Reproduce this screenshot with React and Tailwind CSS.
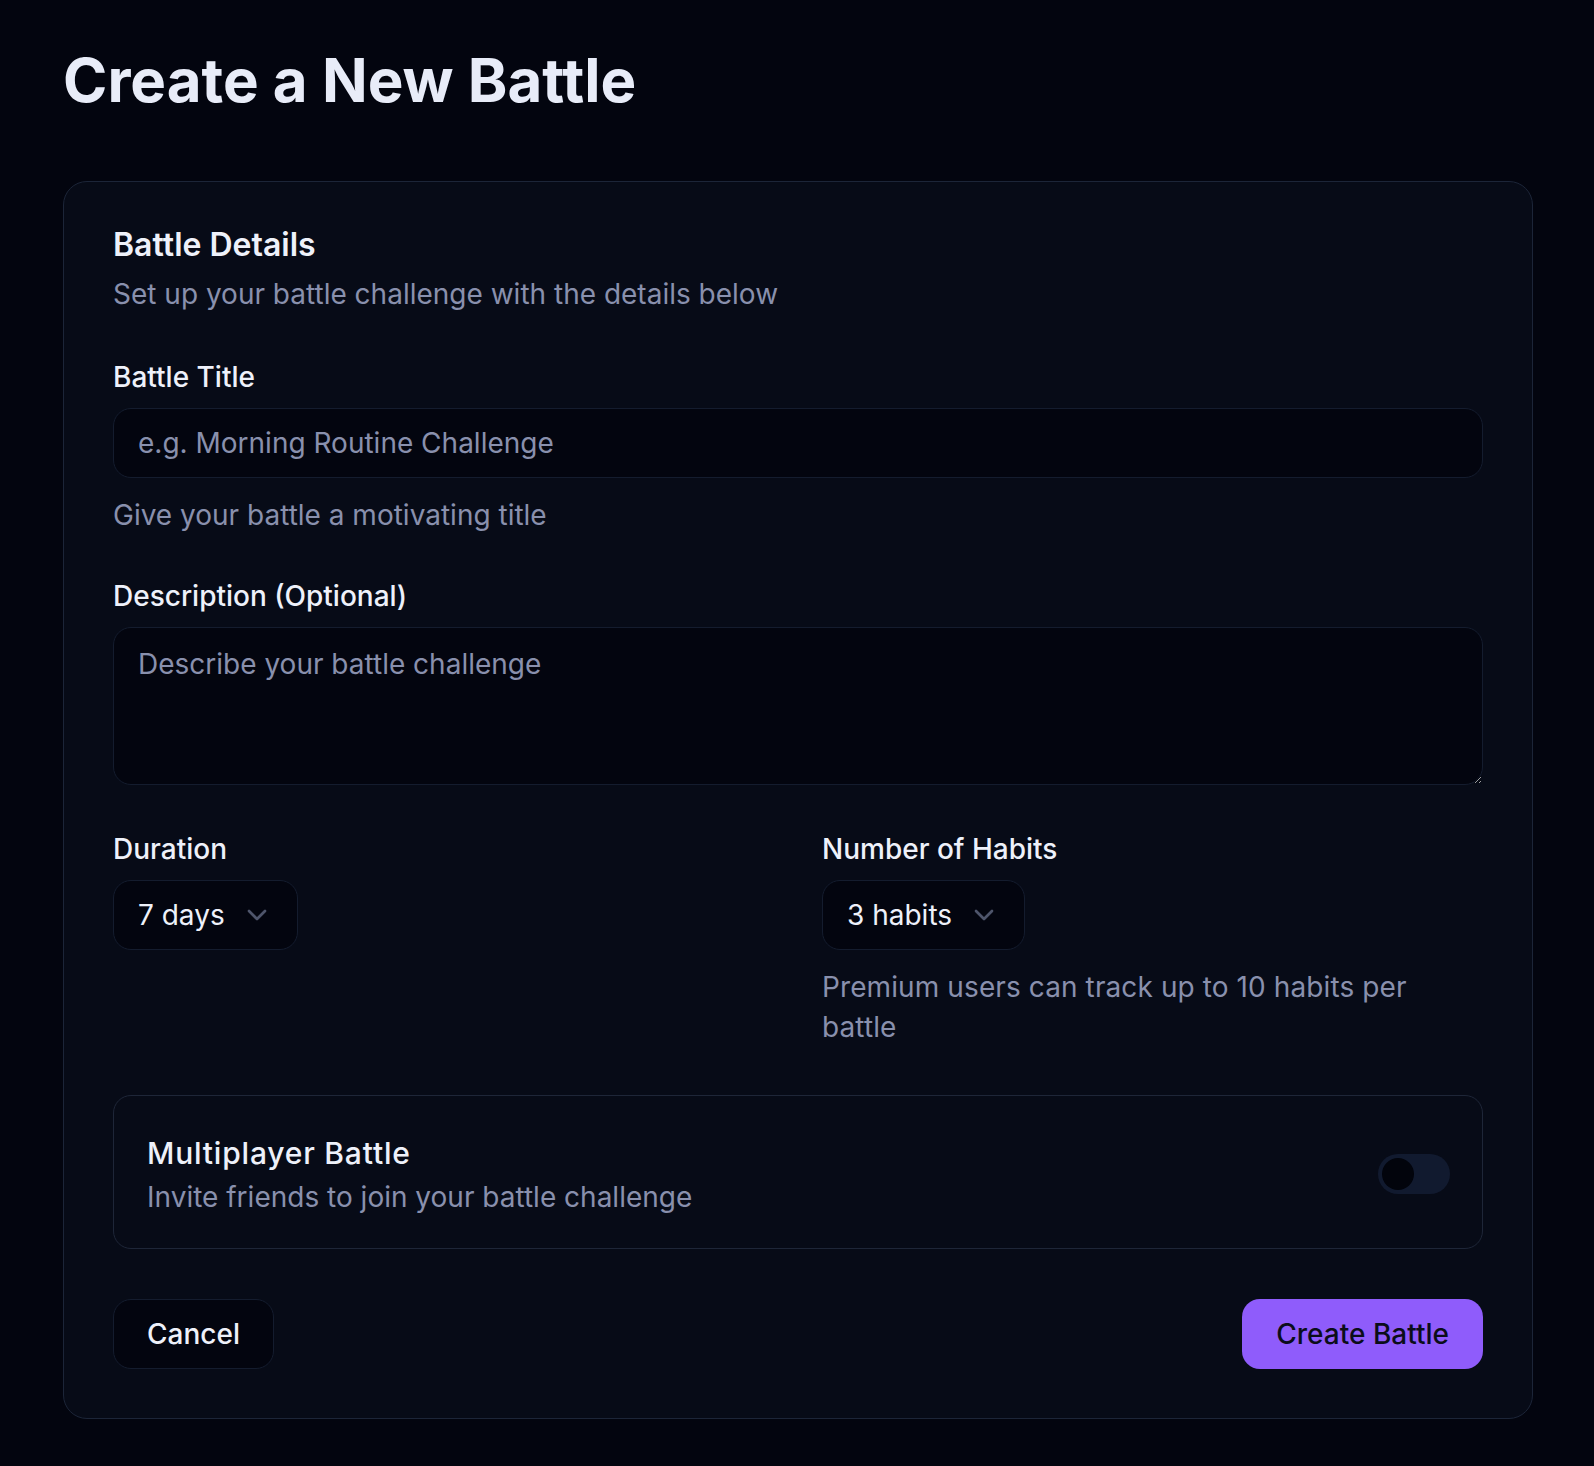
import { ChevronDown } from 'lucide-react';

function Field({ label, children }) {
  return (
    <div>
      <label className="block text-[28px] font-medium leading-[28px] text-[#eef1fa]">{label}</label>
      {children}
    </div>
  );
}

function FakeSelect({ value }) {
  return (
    <div className="mt-[17px] flex h-[70px] w-fit items-center gap-[16px] rounded-[18px] border border-[#141c2e] bg-[#03050f] pl-[24px] pr-[24px]">
      <span className="text-[28px] leading-[40px] text-[#eef1fa]">{value}</span>
      <ChevronDown size={32} strokeWidth={2} className="text-[#4e556b]" />
    </div>
  );
}

export default function App() {
  return (
    <div className="min-h-screen bg-[#03050f] pl-[63px] pr-[61px] pt-[50px] pb-[47px] font-[family-name:Inter,sans-serif]">
      <h1 className="text-[60px] font-bold leading-[60px] text-[#e8ecf8]">Create a New Battle</h1>

      <div className="mt-[71px] rounded-[24px] border border-[#1c2538] bg-[#070b17] px-[49px] pt-[47px] pb-[49px]">
        <h2 className="text-[32px] font-semibold leading-[32px] text-[#eef1fa]">Battle Details</h2>
        <p className="mt-[13px] text-[28px] leading-[40px] text-[#8990ad]">Set up your battle challenge with the details below</p>

        <div className="mt-[49px]">
          <Field label="Battle Title">
            <input
              type="text"
              placeholder="e.g. Morning Routine Challenge"
              className="mt-[17px] block h-[70px] w-full rounded-[18px] border border-[#141c2e] bg-[#03050f] px-[24px] text-[28px] text-[#eef1fa] outline-none placeholder:text-[#8990ad]"
            />
          </Field>
          <p className="mt-[17px] text-[28px] leading-[40px] text-[#8990ad]">Give your battle a motivating title</p>
        </div>

        <div className="mt-[47px]">
          <Field label="Description (Optional)">
            <textarea
              placeholder="Describe your battle challenge"
              className="mt-[17px] block h-[158px] w-full rounded-[18px] border border-[#141c2e] bg-[#03050f] px-[24px] pt-[16px] text-[28px] leading-[40px] text-[#eef1fa] outline-none placeholder:text-[#8990ad]"
            />
          </Field>
        </div>

        <div className="mt-[50px] grid grid-cols-2 gap-x-[48px]">
          <Field label="Duration">
            <FakeSelect value="7 days" />
          </Field>
          <div>
            <Field label="Number of Habits">
              <FakeSelect value="3 habits" />
            </Field>
            <p className="mt-[17px] text-[28px] leading-[40px] tracking-[0.1px] text-[#8990ad]">Premium users can track up to 10 habits per battle</p>
          </div>
        </div>

        <div className="mt-[48px] flex items-center justify-between rounded-[18px] border border-[#1e2638] pl-[33px] pr-[32px] pt-[35px] pb-[31px]">
          <div>
            <p className="text-[30px] font-medium leading-[44px] tracking-[0.8px] text-[#eef1fa]">Multiplayer Battle</p>
            <p className="mt-[2px] text-[28px] leading-[40px] text-[#8990ad]">Invite friends to join your battle challenge</p>
          </div>
          <button className="flex h-[40px] w-[72px] items-center rounded-full bg-[#111a2f] px-[4px]">
            <span className="block h-[32px] w-[32px] rounded-full bg-[#02040c]"></span>
          </button>
        </div>

        <div className="mt-[50px] flex items-center justify-between">
          <button className="h-[70px] rounded-[18px] border border-[#141c2e] bg-[#03050f] px-[33px] text-[28px] font-medium text-[#eef1fa]">Cancel</button>
          <button className="h-[70px] rounded-[18px] bg-[#8f5cfb] px-[34px] text-[28px] font-medium text-[#0b0d1a]">Create Battle</button>
        </div>
      </div>
    </div>
  );
}
